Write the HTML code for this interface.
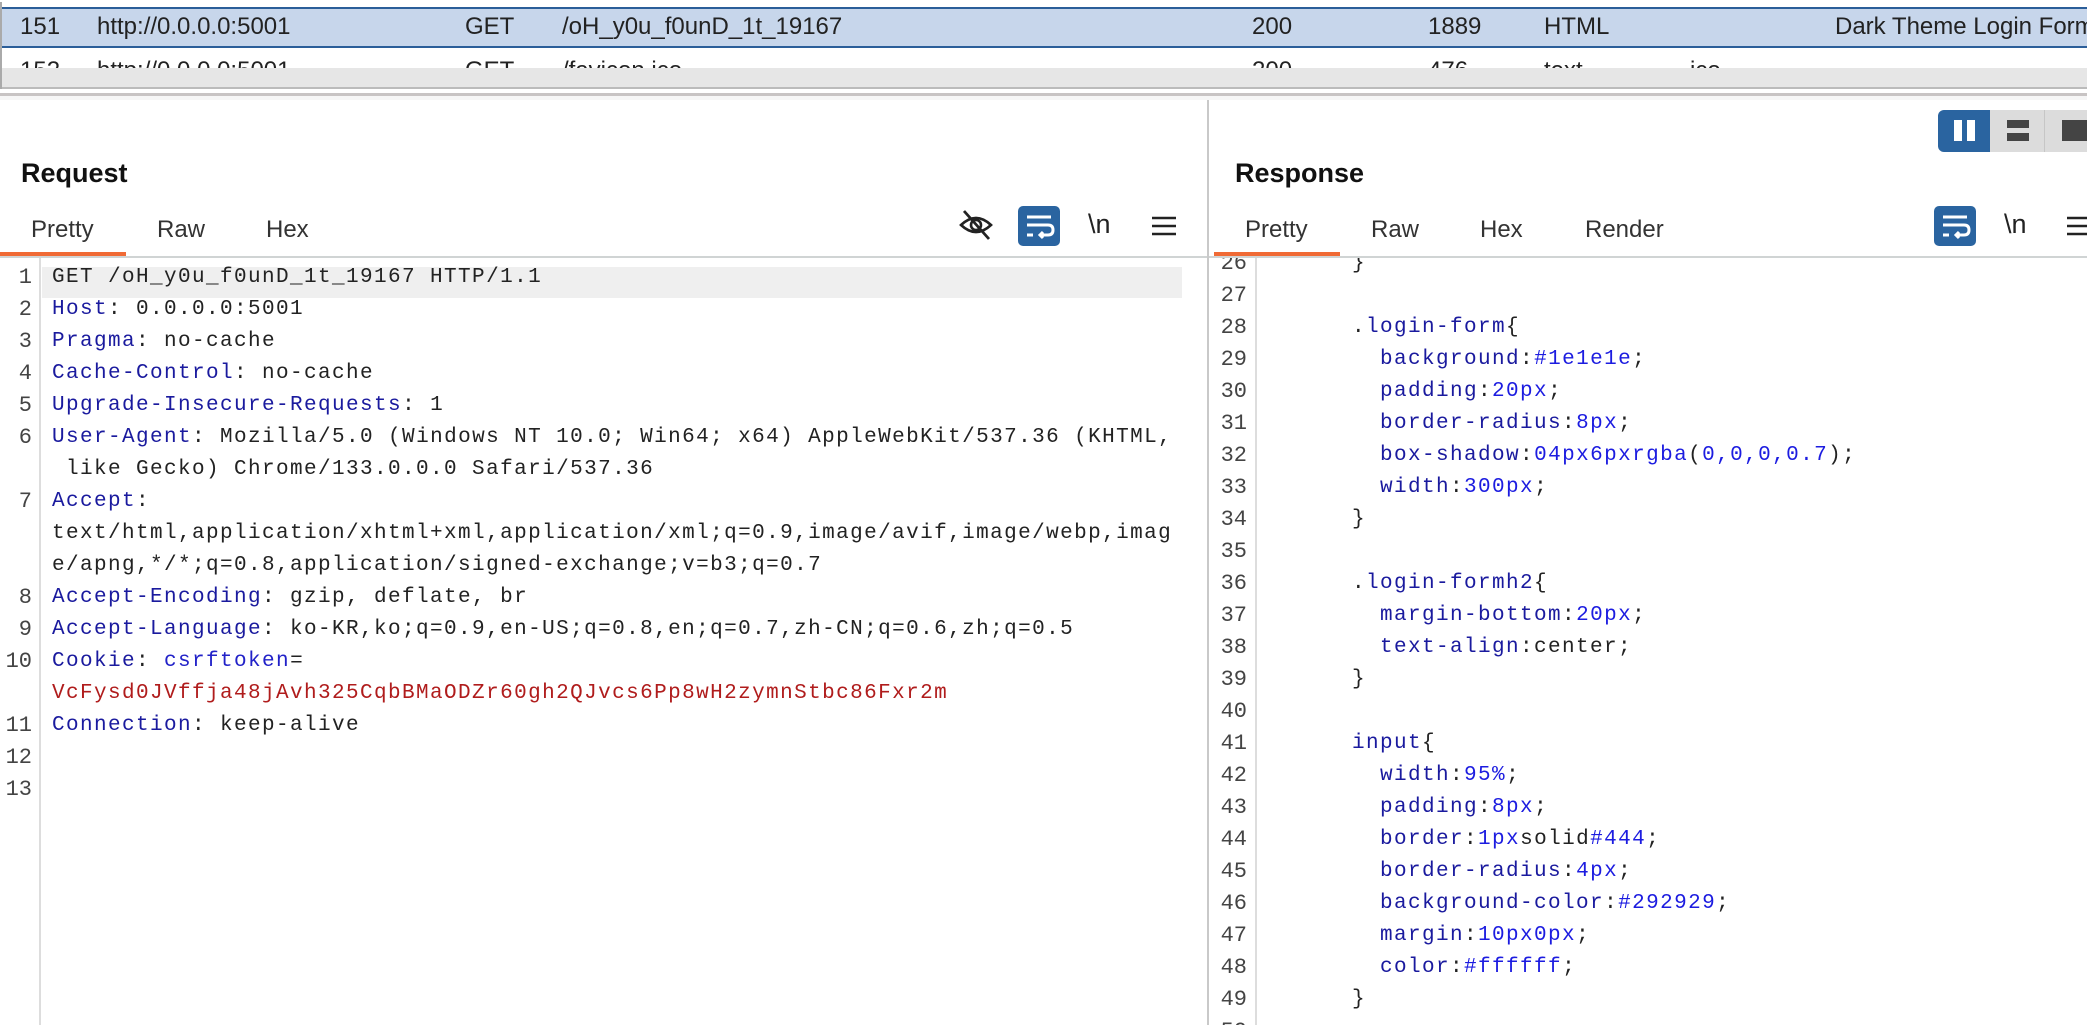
<!DOCTYPE html>
<html><head><meta charset="utf-8"><style>
*{margin:0;padding:0;box-sizing:border-box}
body{width:2087px;height:1025px;overflow:hidden;background:#fff;position:relative;font-family:"Liberation Sans","Noto Sans CJK KR",sans-serif;color:#222}
.a{position:absolute;white-space:pre}
.row{position:absolute;left:0;width:2087px}
.t{font-size:24px}
.code{font-family:"Liberation Mono","Noto Sans CJK KR",monospace;font-size:21px;letter-spacing:1.4px;color:#222}
.ln{position:absolute;font-family:"Liberation Mono",monospace;font-size:22px;color:#444;text-align:right}
.k{color:#1a1a9e}.v{color:#1c1ce0}.r{color:#b01c1c}
.tab{position:absolute;font-size:24px;color:#333;top:216px}
</style></head><body>
<div class="row" style="top:7px;height:41px;background:#c7d6eb;border-top:2px solid #2b5e99;border-bottom:2px solid #2b5e99"></div>
<div class="a t" style="left:20px;top:13px">151</div>
<div class="a t" style="left:97px;top:13px">http://0.0.0.0:5001</div>
<div class="a t" style="left:465px;top:13px">GET</div>
<div class="a t" style="left:562px;top:13px">/oH_y0u_f0unD_1t_19167</div>
<div class="a t" style="left:1252px;top:13px">200</div>
<div class="a t" style="left:1428px;top:13px">1889</div>
<div class="a t" style="left:1544px;top:13px">HTML</div>
<div class="a t" style="left:1835px;top:13px">Dark Theme Login Form</div>
<div style="position:absolute;left:0;top:48px;width:2087px;height:20px;overflow:hidden">
<div class="a t" style="left:20px;top:9px">152</div>
<div class="a t" style="left:97px;top:9px">http://0.0.0.0:5001</div>
<div class="a t" style="left:465px;top:9px">GET</div>
<div class="a t" style="left:562px;top:9px">/favicon.ico</div>
<div class="a t" style="left:1252px;top:9px">200</div>
<div class="a t" style="left:1428px;top:9px">476</div>
<div class="a t" style="left:1544px;top:9px">text</div>
<div class="a t" style="left:1690px;top:9px">ico</div>
</div>
<div class="row" style="top:68px;height:21px;background:#e6e6e6;border-bottom:2px solid #bbb"></div>
<div style="position:absolute;left:0;top:2px;width:2px;height:87px;background:#aaa"></div>
<div class="row" style="top:93px;height:3px;background:#c8c4c4"></div>
<div class="row" style="top:96px;height:4px;background:#f6f6f6"></div>
<div style="position:absolute;left:1207px;top:100px;width:2px;height:925px;background:#c9c9c9"></div>
<!-- Request -->
<div class="a" style="left:21px;top:158px;font-size:27px;font-weight:bold;color:#111">Request</div>
<div class="tab" style="left:31px">Pretty</div>
<div class="tab" style="left:157px">Raw</div>
<div class="tab" style="left:266px">Hex</div>
<div style="position:absolute;left:0;top:252px;width:126px;height:4px;background:#f06a35"></div>
<div style="position:absolute;left:0;top:256px;width:1207px;height:2px;background:#d0d4d4"></div>
<svg style="position:absolute;left:958px;top:208px" width="36" height="34" viewBox="0 0 36 34"><path d="M3 17 Q18 3 33 17 Q18 31 3 17Z" fill="none" stroke="#222" stroke-width="2.6"/><circle cx="18" cy="17" r="5" fill="none" stroke="#222" stroke-width="2.6"/><path d="M6 3 L31 31" stroke="#222" stroke-width="2.8"/></svg>
<div style="position:absolute;left:1018px;top:206px;width:42px;height:40px;background:#2a64a0;border-radius:5px"></div>
<svg style="position:absolute;left:1018px;top:206px" width="42" height="40" viewBox="0 0 42 40"><path d="M9 11H33M9 19H30Q35 19 35 24Q35 29 30 29H22M25 26L22 29L25 32M9 29H15" fill="none" stroke="#fff" stroke-width="3"/></svg>
<div class="a" style="left:1088px;top:209px;font-size:27px;color:#222">\n</div>
<svg style="position:absolute;left:1152px;top:215px" width="24" height="22"><path d="M0 3H24M0 11H24M0 19H24" stroke="#222" stroke-width="2.5"/></svg>
<div style="position:absolute;left:42px;top:267px;width:1140px;height:31px;background:#efefef"></div>
<div style="position:absolute;left:39px;top:258px;width:2px;height:767px;background:#ddd"></div>
<div class="ln" style="left:0;top:262px;width:32px;line-height:32px">1<br>2<br>3<br>4<br>5<br>6<br><br>7<br><br><br>8<br>9<br>10<br><br>11<br>12<br>13</div>
<div class="a code" style="left:52px;top:262px;line-height:32px">GET /oH_y0u_f0unD_1t_19167 HTTP/1.1
<span class="k">Host</span>: 0.0.0.0:5001
<span class="k">Pragma</span>: no-cache
<span class="k">Cache-Control</span>: no-cache
<span class="k">Upgrade-Insecure-Requests</span>: 1
<span class="k">User-Agent</span>: Mozilla/5.0 (Windows NT 10.0; Win64; x64) AppleWebKit/537.36 (KHTML,
 like Gecko) Chrome/133.0.0.0 Safari/537.36
<span class="k">Accept</span>:
text/html,application/xhtml+xml,application/xml;q=0.9,image/avif,image/webp,imag
e/apng,*/*;q=0.8,application/signed-exchange;v=b3;q=0.7
<span class="k">Accept-Encoding</span>: gzip, deflate, br
<span class="k">Accept-Language</span>: ko-KR,ko;q=0.9,en-US;q=0.8,en;q=0.7,zh-CN;q=0.6,zh;q=0.5
<span class="k">Cookie</span>: <span class="k" style="color:#2222c8">csrftoken</span>=
<span class="r">VcFysd0JVffja48jAvh325CqbBMaODZr60gh2QJvcs6Pp8wH2zymnStbc86Fxr2m</span>
<span class="k">Connection</span>: keep-alive</div>
<!-- Response -->
<div style="position:absolute;left:1938px;top:110px;width:52px;height:42px;background:#2a64a0;border-radius:6px 0 0 6px"></div>
<div style="position:absolute;left:1954px;top:120px;width:8px;height:21px;background:#fff"></div>
<div style="position:absolute;left:1967px;top:120px;width:8px;height:21px;background:#fff"></div>
<div style="position:absolute;left:1990px;top:110px;width:97px;height:42px;background:#dcdcdc"></div>
<div style="position:absolute;left:2044px;top:110px;width:1px;height:42px;background:#c6c6c6"></div>
<div style="position:absolute;left:2007px;top:120px;width:22px;height:8px;background:#444"></div>
<div style="position:absolute;left:2007px;top:133px;width:22px;height:8px;background:#444"></div>
<div style="position:absolute;left:2062px;top:120px;width:25px;height:21px;background:#444"></div>
<div class="a" style="left:1235px;top:158px;font-size:27px;font-weight:bold;color:#111">Response</div>
<div class="tab" style="left:1245px">Pretty</div>
<div class="tab" style="left:1371px">Raw</div>
<div class="tab" style="left:1480px">Hex</div>
<div class="tab" style="left:1585px">Render</div>
<div style="position:absolute;left:1214px;top:252px;width:126px;height:4px;background:#f06a35"></div>
<div style="position:absolute;left:1209px;top:256px;width:878px;height:2px;background:#d0d4d4"></div>
<div style="position:absolute;left:1934px;top:206px;width:42px;height:40px;background:#2a64a0;border-radius:5px"></div>
<svg style="position:absolute;left:1934px;top:206px" width="42" height="40" viewBox="0 0 42 40"><path d="M9 11H33M9 19H30Q35 19 35 24Q35 29 30 29H22M25 26L22 29L25 32M9 29H15" fill="none" stroke="#fff" stroke-width="3"/></svg>
<div class="a" style="left:2004px;top:209px;font-size:27px;color:#222">\n</div>
<svg style="position:absolute;left:2067px;top:215px" width="24" height="22"><path d="M0 3H24M0 11H24M0 19H24" stroke="#222" stroke-width="2.5"/></svg>
<div style="position:absolute;left:1209px;top:258px;width:878px;height:767px;overflow:hidden">
<div style="position:absolute;left:46px;top:0;width:2px;height:767px;background:#ddd"></div>
<div class="ln" style="left:0;top:-10px;width:38px;line-height:32px">26<br>27<br>28<br>29<br>30<br>31<br>32<br>33<br>34<br>35<br>36<br>37<br>38<br>39<br>40<br>41<br>42<br>43<br>44<br>45<br>46<br>47<br>48<br>49<br>50</div>
<div class="a code" style="left:143px;top:-10px;line-height:32px">}

.<span class="k">login-form</span>{
  <span class="k">background</span>:<span class="v">#1e1e1e</span>;
  <span class="k">padding</span>:<span class="v">20px</span>;
  <span class="k">border-radius</span>:<span class="v">8px</span>;
  <span class="k">box-shadow</span>:<span class="v">04px6pxrgba</span>(<span class="v">0,0,0,0.7</span>);
  <span class="k">width</span>:<span class="v">300px</span>;
}

.<span class="k">login-formh2</span>{
  <span class="k">margin-bottom</span>:<span class="v">20px</span>;
  <span class="k">text-align</span>:center;
}

<span class="k">input</span>{
  <span class="k">width</span>:<span class="v">95%</span>;
  <span class="k">padding</span>:<span class="v">8px</span>;
  <span class="k">border</span>:<span class="v">1px</span>solid<span class="v">#444</span>;
  <span class="k">border-radius</span>:<span class="v">4px</span>;
  <span class="k">background-color</span>:<span class="v">#292929</span>;
  <span class="k">margin</span>:<span class="v">10px0px</span>;
  <span class="k">color</span>:<span class="v">#ffffff</span>;
}</div>
</div>
</body></html>
